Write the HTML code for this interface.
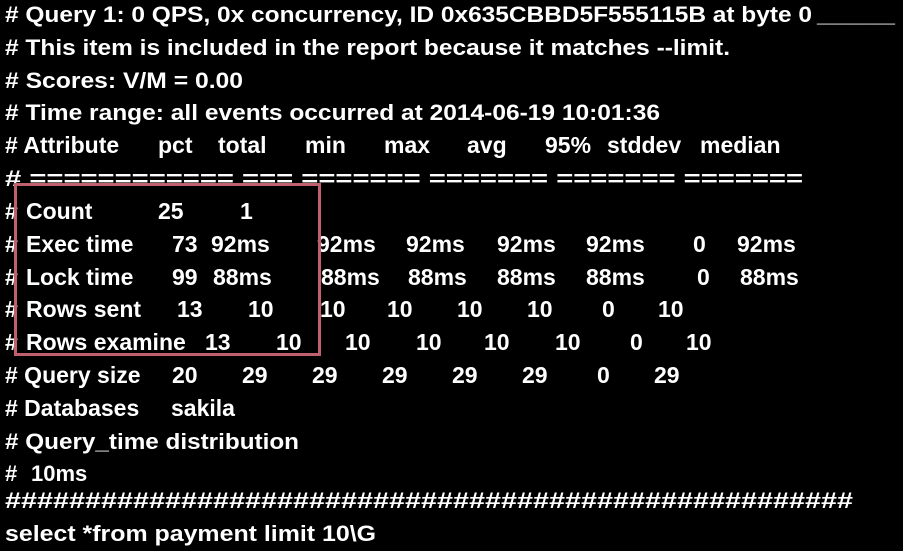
<!DOCTYPE html>
<html><head><meta charset="utf-8"><style>
html,body{margin:0;padding:0;background:#000;width:903px;height:551px;overflow:hidden}
svg{display:block}
text{font-family:"Liberation Sans",sans-serif;font-weight:bold;font-size:22px;fill:#fff}
g text{font-size:23px}
</style></head><body>
<svg width="903" height="551" viewBox="0 0 903 551">
<text x="5" y="22" textLength="807" lengthAdjust="spacingAndGlyphs"># Query 1: 0 QPS, 0x concurrency,  ID 0x635CBBD5F555115B  at byte 0</text>
<text x="817" y="22" textLength="78" lengthAdjust="spacingAndGlyphs">________</text>
<text x="5" y="55" textLength="725" lengthAdjust="spacingAndGlyphs"># This item is included in the report because it matches --limit.</text>
<text x="5" y="88" textLength="238" lengthAdjust="spacingAndGlyphs"># Scores: V/M = 0.00</text>
<text x="5" y="120" textLength="655" lengthAdjust="spacingAndGlyphs"># Time range: all events occurred at 2014-06-19  10:01:36</text>
<g>
<text x="5" y="153"># Attribute</text><text x="158" y="153">pct</text><text x="218" y="153">total</text><text x="305" y="153">min</text><text x="384" y="153">max</text><text x="467" y="153">avg</text><text x="545" y="153">95%</text><text x="607" y="153">stddev</text><text x="700" y="153">median</text>
</g>
<text x="5" y="186" textLength="798" lengthAdjust="spacingAndGlyphs"># ============ === ======= ======= ======= =======</text>
<g>
<text x="5" y="219">#</text><text x="26" y="219">Count</text><text x="158" y="219">25</text><text x="240" y="219">1</text>
<text x="5" y="252">#</text><text x="26" y="252">Exec time</text><text x="172" y="252">73</text><text x="211" y="252">92ms</text><text x="317" y="252">92ms</text><text x="406" y="252">92ms</text><text x="497" y="252">92ms</text><text x="586" y="252">92ms</text><text x="693" y="252">0</text><text x="737" y="252">92ms</text>
<text x="5" y="285">#</text><text x="26" y="285">Lock time</text><text x="172" y="285">99</text><text x="213" y="285">88ms</text><text x="321" y="285">88ms</text><text x="408" y="285">88ms</text><text x="497" y="285">88ms</text><text x="586" y="285">88ms</text><text x="697" y="285">0</text><text x="740" y="285">88ms</text>
<text x="5" y="317">#</text><text x="26" y="317">Rows sent</text><text x="177" y="317">13</text><text x="248" y="317">10</text><text x="320" y="317">10</text><text x="387" y="317">10</text><text x="457" y="317">10</text><text x="527" y="317">10</text><text x="602" y="317">0</text><text x="658" y="317">10</text>
<text x="5" y="350">#</text><text x="26" y="350">Rows examine</text><text x="205" y="350">13</text><text x="276" y="350">10</text><text x="345" y="350">10</text><text x="416" y="350">10</text><text x="484" y="350">10</text><text x="555" y="350">10</text><text x="630" y="350">0</text><text x="686" y="350">10</text>
<text x="5" y="383"># Query size</text><text x="172" y="383">20</text><text x="242" y="383">29</text><text x="312" y="383">29</text><text x="382" y="383">29</text><text x="452" y="383">29</text><text x="522" y="383">29</text><text x="597" y="383">0</text><text x="654" y="383">29</text>
<text x="5" y="416"># Databases</text><text x="171" y="416">sakila</text>
</g>
<text x="5" y="449" textLength="294" lengthAdjust="spacingAndGlyphs"># Query_time distribution</text>
<text x="5" y="481"># </text><text x="31" y="481">10ms</text>
<text x="5" y="508" textLength="848" lengthAdjust="spacingAndGlyphs">#####################################################</text>
<text x="5" y="541" textLength="371" lengthAdjust="spacingAndGlyphs">select *from payment limit 10\G</text>
<rect x="15.5" y="184.5" width="304" height="170" fill="none" stroke="#c0606e" stroke-width="3"/>
</svg>
</body></html>
